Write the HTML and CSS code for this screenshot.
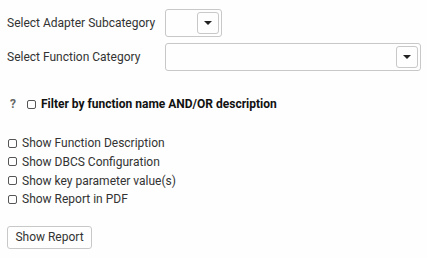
FILE: index.html
```html
<!DOCTYPE html>
<html>
<head>
<meta charset="utf-8">
<link rel="stylesheet" href="styles.css">
</head>
<body>
<div class="page">
  <div class="form-row">
    <label class="label">Select Adapter Subcategory</label>
    <div class="select select-small"><span class="caret-btn"><span class="caret"></span></span></div>
  </div>
  <div class="form-row">
    <label class="label">Select Function Category</label>
    <div class="select select-wide"><span class="caret-btn"><span class="caret"></span></span></div>
  </div>
  <div class="filter-row">
    <span class="help">?</span>
    <span class="cb"></span>
    <span class="filter-text">Filter by function name AND/OR description</span>
  </div>
  <div class="options">
    <div class="opt"><span class="cb"></span><span>Show Function Description</span></div>
    <div class="opt"><span class="cb"></span><span>Show DBCS Configuration</span></div>
    <div class="opt"><span class="cb"></span><span>Show key parameter value(s)</span></div>
    <div class="opt"><span class="cb"></span><span>Show Report in PDF</span></div>
  </div>
  <button class="btn">Show Report</button>
</div>
</body>
</html>
```
FILE: styles.css
```css
* { box-sizing: border-box; }
html, body { margin: 0; padding: 0; background: #fdfefd; }
body { font-family: Roboto, "Noto Sans", sans-serif; font-size: 12px; color: #333; }
.page { padding: 9px 6px 0 7px; display: flex; flex-direction: column; align-items: flex-start; }
.form-row { display: flex; align-items: center; height: 28px; margin-bottom: 6px; }
.label { width: 158px; }
.select { height: 28px; border: 1px solid #c8c8c8; border-radius: 3px; display: flex; justify-content: flex-end; align-items: center; padding-right: 2px; background: #fdfefd; }
.select-small { width: 57px; }
.select-wide { width: 256px; }
.caret-btn { width: 22px; height: 22px; border: 1px solid #c8c8c8; border-radius: 3px; display: flex; align-items: center; justify-content: center; }
.caret { width: 0; height: 0; border-left: 4px solid transparent; border-right: 4px solid transparent; border-top: 4px solid #222; }
.filter-row { display: flex; align-items: center; margin-top: 19px; height: 16px; }
.help { font-weight: bold; color: #666; margin-left: 3px; width: 17px; font-size: 12px; }
.filter-text { font-weight: bold; color: #111; margin-left: 5px; }
.cb { width: 9px; height: 9px; border: 1px solid #555; border-radius: 2px; display: inline-block; flex: none; }
.options { margin-top: 22px; display: flex; flex-direction: column; }
.opt { display: flex; align-items: center; height: 18.67px; }
.opt .cb { margin-left: 1px; margin-right: 5px; }
.btn { margin-top: 17px; font-family: Roboto, sans-serif; font-size: 12px; color: #333; background: #fdfefd; border: 1px solid #c8c8c8; border-radius: 3px; height: 23px; width: 85px; padding: 0; }
```
